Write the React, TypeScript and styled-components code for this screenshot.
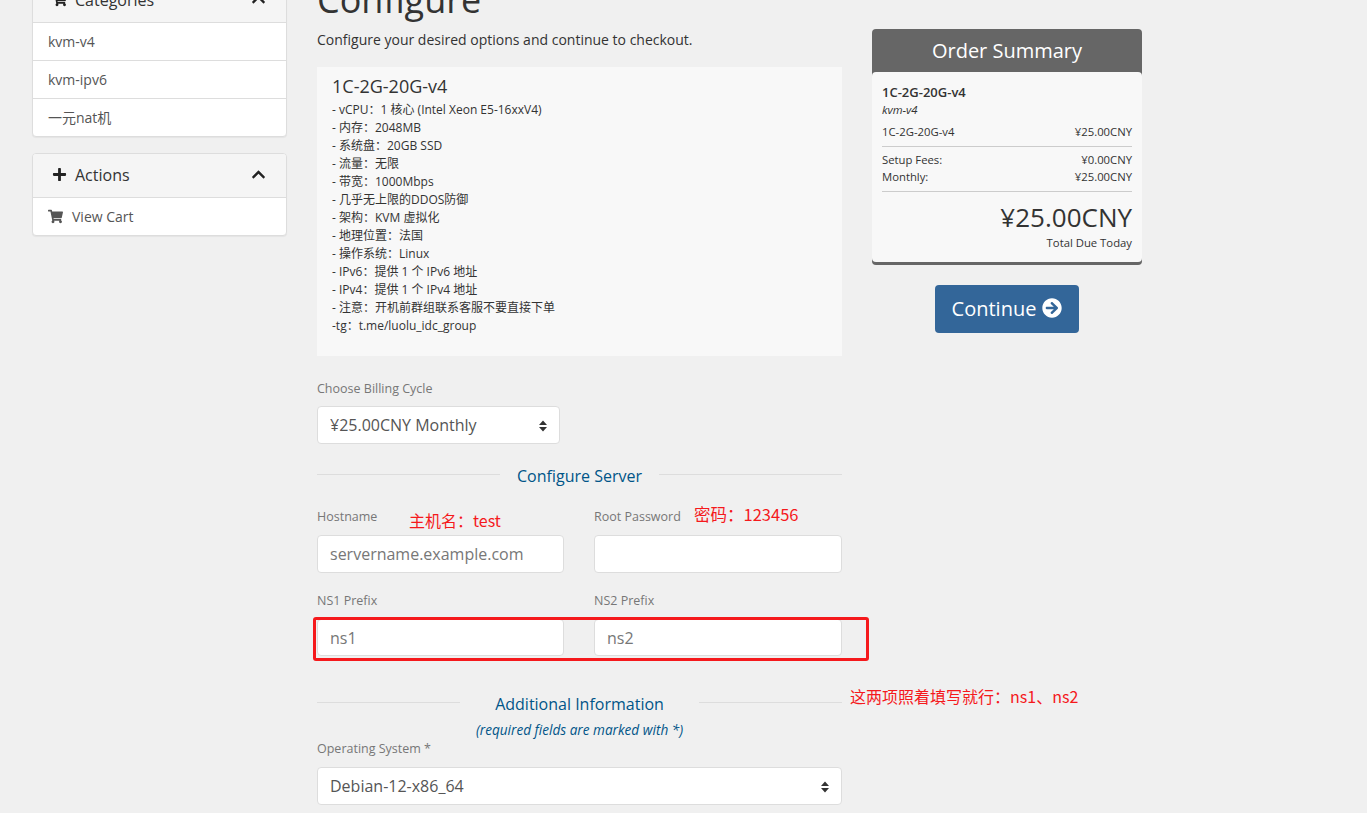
import React from "react";
import styled, { createGlobalStyle } from "styled-components";
import { FaShoppingCart, FaPlus, FaChevronUp, FaArrowCircleRight } from "react-icons/fa";

const FONT = `"Open Sans", "Noto Sans CJK SC", sans-serif`;

const Global = createGlobalStyle`
  html, body { margin: 0; padding: 0; height: 100%; overflow: hidden; background: #f0f0f0; }
  body { font-family: ${FONT}; color: #333; font-size: 14px; }
  * { box-sizing: border-box; }
`;

const Page = styled.div`
  position: relative;
  display: flex;
  align-items: flex-start;
  gap: 30px;
  padding-left: 32px;
  margin-top: -22px;
  width: 1367px;
`;

const Sidebar = styled.aside`
  width: 255px;
  flex: none;
  display: flex;
  flex-direction: column;
  gap: 16px;
`;

const Panel = styled.section`
  background: #fff;
  border: 1px solid #ddd;
  border-radius: 4px;
  box-shadow: 0 1px 1px rgba(0, 0, 0, 0.05);
  overflow: hidden;
`;

const PanelHead = styled.header`
  height: 44px;
  background: #f5f5f5;
  border-bottom: 1px solid #ddd;
  display: flex;
  align-items: center;
  padding: 0 20px 2px 19px;
  font-size: 16px;
  color: #333;
  gap: 8px;
  svg { font-size: 15px; color: #222; }
`;

const HeadTitle = styled.span`
  flex: 1;
`;

const PanelRow = styled.a<{ $last?: boolean }>`
  display: flex;
  align-items: center;
  gap: 9px;
  height: ${(p) => (p.$last ? "37px" : "38px")};
  padding: 0 15px;
  color: #555;
  font-size: 14px;
  line-height: 20px;
  border-bottom: ${(p) => (p.$last ? "none" : "1px solid #ddd")};
  svg { font-size: 15px; color: #555; }
`;

const Main = styled.main`
  width: 525px;
  flex: none;
`;

const Title = styled.h1`
  margin: 0;
  padding-top: 2px;
  font-size: 36px;
  font-weight: 400;
  line-height: 40px;
  color: #333;
`;

const Lead = styled.p`
  margin: 10px 0 0;
  font-size: 14px;
  line-height: 20px;
  color: #333;
`;

const ProductBox = styled.div`
  margin-top: 17px;
  height: 289px;
  padding: 6px 15px 0;
  background: #f8f8f8;
`;

const ProductName = styled.div`
  font-size: 18px;
  line-height: 26px;
  margin-bottom: 2px;
  color: #333;
`;

const ProductLine = styled.div`
  font-size: 12px;
  line-height: 18px;
  height: 18px;
  color: #333;
`;

const Label = styled.label`
  display: block;
  font-size: 12.5px;
  line-height: 17px;
  color: #777;
`;

const BillingField = styled.div`
  margin-top: 24px;
  width: 243px;
`;

const SelectWrap = styled.div`
  position: relative;
  margin-top: 9px;
  svg { position: absolute; right: 12px; top: 14px; }
`;

const Select = styled.select`
  display: block;
  width: 100%;
  height: 38px;
  padding: 0 12px;
  appearance: none;
  background: #fff;
  border: 1px solid #ddd;
  border-radius: 4px;
  font-family: ${FONT};
  font-size: 16px;
  color: #555;
`;

const Divider = styled.div<{ $inset: number }>`
  display: flex;
  align-items: center;
  height: 24px;
  font-size: 16px;
  color: #058;
  justify-content: space-between;
  &::before, &::after {
    content: "";
    width: ${(p) => p.$inset}px;
    height: 1px;
    background: #ddd;
    margin-top: -4px;
  }
`;

const ServerHeading = styled.div`
  margin-top: 20px;
`;

const Grid = styled.div`
  display: grid;
  grid-template-columns: 247px 248px;
  column-gap: 30px;
  row-gap: 19px;
  margin-top: 20px;
`;

const Field = styled.div``;

const Input = styled.input<{ $short?: boolean }>`
  display: block;
  width: 100%;
  height: ${(p) => (p.$short ? "37px" : "38px")};
  margin-top: 10px;
  padding: 0 12px;
  background: #fff;
  border: 1px solid #ddd;
  border-radius: 4px;
  font-family: ${FONT};
  font-size: 16px;
  color: #777;
  &::placeholder { color: #777; opacity: 1; }
`;

const InfoHeading = styled.div`
  margin-top: 36px;
`;

const Required = styled.div`
  margin-top: 5px;
  text-align: center;
  font-size: 13.6px;
  line-height: 18px;
  font-style: italic;
  color: #058;
`;

const OsField = styled.div`
  margin-top: 1px;
  ${SelectWrap} { margin-top: 10px; }
`;

const SummaryCol = styled.div`
  width: 270px;
  flex: none;
  margin-top: 51px;
  display: flex;
  flex-direction: column;
  align-items: center;
`;

const Summary = styled.div`
  width: 100%;
  background: #666;
  border-radius: 4px;
  padding-bottom: 3px;
`;

const SummaryHead = styled.h2`
  margin: 0;
  height: 43px;
  text-align: center;
  font-size: 20px;
  font-weight: 400;
  line-height: 44px;
  color: #fff;
`;

const SummaryBody = styled.div`
  height: 190px;
  padding: 11px 10px 0;
  background: #f8f8f8;
  border-radius: 4px;
  font-size: 11.3px;
  color: #333;
`;

const SummaryName = styled.div`
  font-size: 13px;
  font-weight: 600;
  line-height: 18px;
`;

const SummaryGroup = styled.em`
  display: block;
  font-size: 11.3px;
  line-height: 18px;
`;

const SummaryRow = styled.div`
  display: flex;
  justify-content: space-between;
  line-height: 17px;
`;

const ItemRow = styled(SummaryRow)`
  margin-top: 4px;
`;

const Rule = styled.hr`
  border: 0;
  border-top: 1px solid #ccc;
  margin: 6px 0 4px;
`;

const Total = styled.div`
  margin-top: 8px;
  text-align: right;
  font-size: 26px;
  line-height: 34px;
  color: #333;
`;

const TotalNote = styled.div`
  text-align: right;
  font-size: 11.3px;
  line-height: 18px;
`;

const Continue = styled.button`
  margin-top: 20px;
  width: 144px;
  height: 48px;
  display: flex;
  align-items: center;
  justify-content: center;
  gap: 6px;
  padding: 0 0 2px;
  background: #369;
  border: 0;
  border-radius: 4px;
  font-family: ${FONT};
  font-size: 20px;
  color: #fff;
  svg { font-size: 20px; }
`;

const RedNote = styled.span<{ $x: number; $y: number; $size?: number }>`
  position: absolute;
  left: ${(p) => p.$x}px;
  top: ${(p) => p.$y + 22}px;
  font-size: ${(p) => p.$size ?? 16}px;
  line-height: 20px;
  color: #f5191c;
  white-space: nowrap;
  font-family: "Noto Sans CJK SC", "Open Sans", sans-serif;
`;

const RedBox = styled.div`
  position: absolute;
  left: 313px;
  top: ${617 + 22}px;
  width: 556px;
  height: 44px;
  border: 3px solid #f5191c;
  border-radius: 3px;
`;

const Caret = () => (
  <svg width="10" height="12" viewBox="0 0 10 12" fill="#333">
    <path d="M5 0.5 9 5H1zM5 11.5 1 7h8z" />
  </svg>
);

const LINES = [
  "- vCPU：1 核心 (Intel Xeon E5-16xxV4)",
  "- 内存：2048MB",
  "- 系统盘：20GB SSD",
  "- 流量：无限",
  "- 带宽：1000Mbps",
  "- 几乎无上限的DDOS防御",
  "- 架构：KVM 虚拟化",
  "- 地理位置：法国",
  "- 操作系统：Linux",
  "- IPv6：提供 1 个 IPv6 地址",
  "- IPv4：提供 1 个 IPv4 地址",
  "- 注意：开机前群组联系客服不要直接下单",
  "-tg：t.me/luolu_idc_group",
];

export default function App() {
  return (
    <>
      <Global />
      <Page>
        <Sidebar>
          <Panel>
            <PanelHead>
              <FaShoppingCart />
              <HeadTitle>Categories</HeadTitle>
              <FaChevronUp />
            </PanelHead>
            <PanelRow>kvm-v4</PanelRow>
            <PanelRow>kvm-ipv6</PanelRow>
            <PanelRow $last>一元nat机</PanelRow>
          </Panel>
          <Panel>
            <PanelHead>
              <FaPlus />
              <HeadTitle>Actions</HeadTitle>
              <FaChevronUp />
            </PanelHead>
            <PanelRow $last>
              <FaShoppingCart />
              View Cart
            </PanelRow>
          </Panel>
        </Sidebar>

        <Main>
          <Title>Configure</Title>
          <Lead>Configure your desired options and continue to checkout.</Lead>
          <ProductBox>
            <ProductName>1C-2G-20G-v4</ProductName>
            {LINES.map((l) => (
              <ProductLine key={l}>{l}</ProductLine>
            ))}
          </ProductBox>

          <BillingField>
            <Label>Choose Billing Cycle</Label>
            <SelectWrap>
              <Select defaultValue="m">
                <option value="m">¥25.00CNY Monthly</option>
              </Select>
              <Caret />
            </SelectWrap>
          </BillingField>

          <ServerHeading>
            <Divider $inset={183}>Configure Server</Divider>
          </ServerHeading>

          <Grid>
            <Field>
              <Label>Hostname</Label>
              <Input placeholder="servername.example.com" />
            </Field>
            <Field>
              <Label>Root Password</Label>
              <Input />
            </Field>
            <Field>
              <Label>NS1 Prefix</Label>
              <Input $short defaultValue="ns1" />
            </Field>
            <Field>
              <Label>NS2 Prefix</Label>
              <Input $short defaultValue="ns2" />
            </Field>
          </Grid>

          <InfoHeading>
            <Divider $inset={143}>Additional Information</Divider>
          </InfoHeading>
          <Required>(required fields are marked with *)</Required>

          <OsField>
            <Label>Operating System *</Label>
            <SelectWrap>
              <Select defaultValue="d">
                <option value="d">Debian-12-x86_64</option>
              </Select>
              <Caret />
            </SelectWrap>
          </OsField>
        </Main>

        <SummaryCol>
          <Summary>
            <SummaryHead>Order Summary</SummaryHead>
            <SummaryBody>
              <SummaryName>1C-2G-20G-v4</SummaryName>
              <SummaryGroup>kvm-v4</SummaryGroup>
              <ItemRow>
                <span>1C-2G-20G-v4</span>
                <span>¥25.00CNY</span>
              </ItemRow>
              <Rule />
              <SummaryRow>
                <span>Setup Fees:</span>
                <span>¥0.00CNY</span>
              </SummaryRow>
              <SummaryRow>
                <span>Monthly:</span>
                <span>¥25.00CNY</span>
              </SummaryRow>
              <Rule />
              <Total>¥25.00CNY</Total>
              <TotalNote>Total Due Today</TotalNote>
            </SummaryBody>
          </Summary>
          <Continue>
            Continue <FaArrowCircleRight />
          </Continue>
        </SummaryCol>

        <RedNote $x={409} $y={510}>主机名：test</RedNote>
        <RedNote $x={694} $y={504} $size={16.5}>密码：123456</RedNote>
        <RedNote $x={850} $y={686}>这两项照着填写就行：ns1、ns2</RedNote>
        <RedBox />
      </Page>
    </>
  );
}
